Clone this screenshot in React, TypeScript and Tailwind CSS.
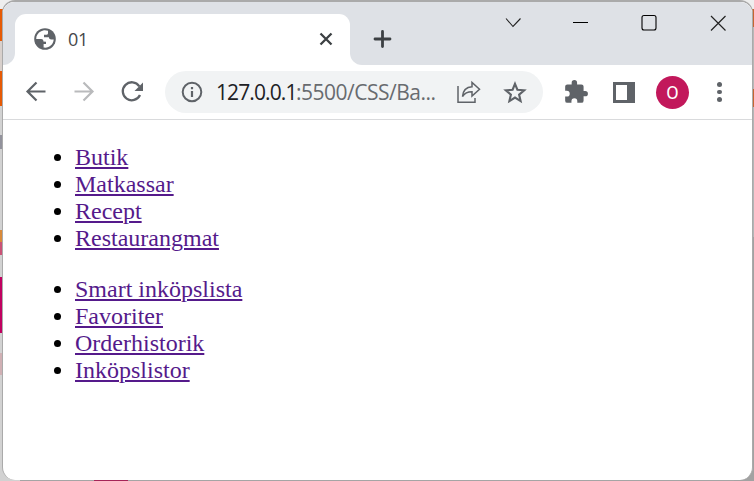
import React from "react";

const shopLinks = ["Butik", "Matkassar", "Recept", "Restaurangmat"];
const accountLinks = ["Smart inköpslista", "Favoriter", "Orderhistorik", "Inköpslistor"];

function LinkList({ items }: { items: string[] }) {
  return (
    <ul className="list-none">
      {items.map((item) => (
        <li key={item} className="flex h-[27px] items-center">
          <span className="mr-[14px] h-[7px] w-[7px] rounded-full bg-black" />
          <a
            href="#"
            className="text-[24px] leading-[27px] text-[#551a8b] underline decoration-[#551a8b] decoration-2 underline-offset-2"
          >
            {item}
          </a>
        </li>
      ))}
    </ul>
  );
}

function Desktop() {
  return (
    <div className="flex h-full justify-between">
      <div className="flex w-5 flex-col bg-[#d2d2d2]">
        <div className="h-[9px] bg-[#eeeeee]" />
        <div className="h-8 bg-[#e65a05]" />
        <div className="h-[30px] bg-[#d8d0cc]" />
        <div className="h-[35px] bg-[#e65a05]" />
        <div className="h-[29px]" />
        <div className="h-[14px] bg-[#92929c]" />
        <div className="h-[81px]" />
        <div className="h-3 bg-[#d98a3a]" />
        <div className="h-[13px] bg-[#ca5276]" />
        <div className="h-[22px]" />
        <div className="h-[56px] bg-[#c00060]" />
        <div className="h-5" />
        <div className="h-[22px] bg-[#d0b0b4]" />
      </div>
      <div className="flex grow items-end pl-[74px]">
        <div className="h-1 w-[34px] bg-[#a52457]" />
      </div>
      <div className="flex w-5 flex-col bg-[#b5b5b5]">
        <div className="h-[9px] bg-[#eeeeee]" />
        <div className="h-[18px] bg-[#c76532]" />
        <div className="h-[62px] bg-[#b7b7b7]" />
        <div className="h-[18px] bg-[#c76532]" />
        <div className="h-[130px] bg-[#b3b5b6]" />
        <div className="grow bg-[#a2a2a2]" />
      </div>
    </div>
  );
}

export default function App() {
  return (
    <div className="relative h-[481px] w-[754px] overflow-hidden bg-[#a5a5a5]">
      <Desktop />
      <div className="absolute top-0 left-[2px] h-[480px] w-[751px] overflow-hidden rounded-[13px] border-x border-t-2 border-[#aaaaaa] bg-white">
        <header className="bg-white">
          <div className="h-3 bg-[#dee1e6]" />
          <div className="flex h-[51px]">
            <div className="w-3 rounded-br-[12px] bg-[#dee1e6]" />
            <div className="w-[335px] bg-[linear-gradient(#dee1e6_50%,white_50%)]">
              <div className="flex h-[51px] items-center rounded-t-[11px] bg-white pr-[14px] pl-[18px]">
                <svg className="-mt-px h-6 w-6" viewBox="0 0 24 24" fill="#5f6368">
                  <circle cx="12" cy="12" r="10.8" />
                  <path
                    fill="white"
                    d="M8.2 4.2C5 5.7 3.1 8.6 3.2 12l4.9.1c1.8.1 2.4 1 2.3 2.5l2.6.1v2.4h-2.4v3.5c5.4.8 9.7-2.9 10.1-8.1h-2.5c-1.3 0-2.2-.8-2.3-2.2H11V7.7h2.5c1.1 0 1.600-.9 1.500-2V3.800a9 9 0 0 0-4.100-.6L8.200 4.200Z"
                  />
                </svg>
                <span className="-mt-px ml-[11px] grow font-['Open_Sans',sans-serif] text-[18px] leading-6 tracking-[-0.4px] text-[#45474a]">
                  01
                </span>
                <svg className="-mt-px h-5 w-5" viewBox="0 0 20 20" stroke="#3c4043" strokeWidth="2.3">
                  <path d="m4.5 4.5 11 11m0-11-11 11" />
                </svg>
              </div>
            </div>
            <div className="flex grow rounded-bl-[12px] bg-[#dee1e6] pl-[22px]">
              <svg className="mt-[15px] h-5 w-5" viewBox="0 0 20 20" stroke="#3c4043" strokeWidth="2.8" strokeLinecap="round">
                <path d="M10.5 2.5v15M3 10h15" />
              </svg>
              <div className="-mt-[2px] ml-auto flex h-5 items-start gap-[48.500px] pr-[25px]">
                <svg className="h-5 w-5" viewBox="0 0 20 20" fill="none" stroke="#222222" strokeWidth="1.1">
                  <path d="m3 6.500 7 8 7.500-8" />
                </svg>
                <svg className="-ml-[1.500px] h-5 w-5" viewBox="0 0 20 20" fill="none" stroke="black">
                  <path d="M3 10.5h15" />
                </svg>
                <svg className="h-5 w-5" viewBox="0 0 20 20" fill="none" stroke="black" strokeWidth="1.1">
                  <rect x="3" y="3.5" width="14" height="14.5" rx="2" />
                </svg>
                <svg className="h-5 w-5" viewBox="0 0 20 20" stroke="#222222" strokeWidth="1.2">
                  <path d="m4 4 14.5 14.5M18.500 4 4 18.500" />
                </svg>
              </div>
            </div>
          </div>
          <div className="flex h-[55px] items-center border-b border-[#d9dadc] pl-[20px]">
            <svg className="h-[26px] w-[26px]" viewBox="0 0 26 26" fill="none" stroke="#5f6368" strokeWidth="2.2">
              <path d="M22.500 12.500H4.500m9-9-9 9 9 9" />
            </svg>
            <svg className="ml-[22px] h-[26px] w-[26px]" viewBox="0 0 26 26" fill="none" stroke="#b9babc" strokeWidth="2.2">
              <path d="M3.500 12.500h18m-9-9 9 9-9 9" />
            </svg>
            <svg className="ml-[22px] h-[26px] w-[26px]" viewBox="0 0 26 26" fill="none" stroke="#5f6368" strokeWidth="2.3">
              <path d="M20.300 7.300A9 9 0 1 0 21 16" />
              <path d="M24 3.500V12h-8.500Z" fill="#5f6368" stroke="none" />
            </svg>
            <div className="ml-5 flex h-[42px] w-[378px] items-center rounded-full bg-[#f1f3f4] pl-4">
              <svg className="h-[22px] w-[22px]" viewBox="0 0 22 22" fill="none" stroke="#5f6368" strokeWidth="2">
                <circle cx="11" cy="11" r="9.300" />
                <path d="M11 10v6M11 6v2.200" strokeWidth="2.200" />
              </svg>
              <div className="ml-[13px] flex w-[228px] whitespace-nowrap font-['Open_Sans',sans-serif] text-[21px] leading-[30px]">
                <span className="w-[80px] tracking-[-0.9px] text-[#202124]">127.0.0.1</span>
                <span className="tracking-[-0.5px] text-[#686b6f]">:5500/CSS/Ba...</span>
              </div>
              <svg className="ml-[12px] h-[26px] w-[26px]" viewBox="0 0 26 26" fill="none" stroke="#5f6368" strokeWidth="1.5">
                <path d="M2 7v16.200h17V19" />
                <path d="M16 3.500v4.200C9.500 8 7 12 6.500 17.500c2.500-4 5-4.700 9.500-4.700v4.200l7.500-6.700Z" />
              </svg>
              <svg className="ml-[21px] h-6 w-6" viewBox="0 0 24 24" fill="none" stroke="#5f6368" strokeWidth="2.1">
                <path d="m12 3.800 2.400 5.900 6.800.6-5.100 4.300 1.500 6.500-5.600-3.500-5.600 3.500 1.500-6.500-5.100-4.300 6.800-.6Z" />
              </svg>
            </div>
            <svg className="ml-[20px] h-[26px] w-[26px]" viewBox="0 0 24 24" fill="#5f6368">
              <path d="M20.500 11H19V7a2 2 0 0 0-2-2h-4V3.500a2.500 2.500 0 0 0-5 0V5H4a2 2 0 0 0-2 2v3.800h1.500a2.700 2.700 0 0 1 0 5.400H2V20a2 2 0 0 0 2 2h3.800v-1.500a2.700 2.700 0 0 1 5.400 0V22H17a2 2 0 0 0 2-2v-4h1.500a2.500 2.500 0 0 0 0-5Z" />
            </svg>
            <div className="ml-6 h-[21px] w-[22px] border-y-[3px] border-r-[8px] border-l-[3px] border-[#5f6368]" />
            <div className="ml-[21px] flex h-[33px] w-[33px] items-center justify-center rounded-full bg-[#c2185b] font-['Roboto',sans-serif] text-[18px] text-white">
              O
            </div>
            <div className="ml-[28px] flex flex-col gap-[3px]">
              <span className="h-[4.500px] w-[4.500px] rounded-full bg-[#5f6368]" />
              <span className="h-[4.500px] w-[4.500px] rounded-full bg-[#5f6368]" />
              <span className="h-[4.500px] w-[4.500px] rounded-full bg-[#5f6368]" />
            </div>
          </div>
        </header>
        <main className="flex flex-col gap-6 pt-6 pl-[51px] font-['Liberation_Serif',serif]">
          <LinkList items={shopLinks} />
          <LinkList items={accountLinks} />
        </main>
      </div>
    </div>
  );
}
